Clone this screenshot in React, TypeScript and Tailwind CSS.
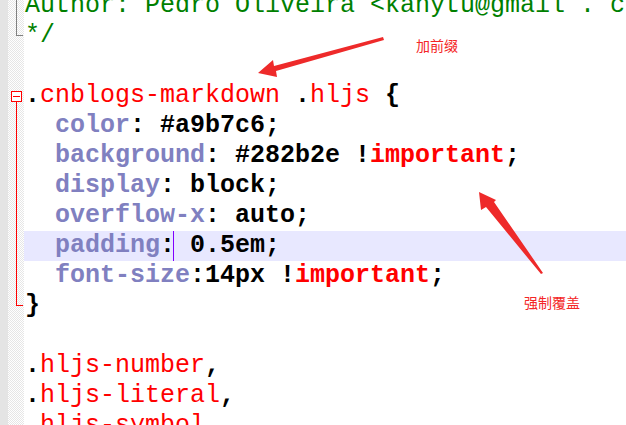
type Seg = { t: string; c?: string };
type Fold = "none" | "gline" | "gend" | "rstart" | "rline" | "rend";

const green = "text-[#008000]";
const red = "text-[#ff0000]";
const prop = "text-[#8080c0] font-bold";
const val = "text-black font-bold";
const imp = "text-[#ff0000] font-bold";

const lines: { segs: Seg[]; fold: Fold; hl?: boolean }[] = [
  { segs: [{ t: "Author: Pedro Oliveira <kanytu@gmail . com>", c: green }], fold: "gline" },
  { segs: [{ t: "*/", c: green }], fold: "gend" },
  { segs: [], fold: "none" },
  {
    segs: [
      { t: ".", c: val },
      { t: "cnblogs-markdown ", c: red },
      { t: ".", c: val },
      { t: "hljs ", c: red },
      { t: "{", c: val },
    ],
    fold: "rstart",
  },
  { segs: [{ t: "  color", c: prop }, { t: ": #a9b7c6;", c: val }], fold: "rline" },
  {
    segs: [
      { t: "  background", c: prop },
      { t: ": #282b2e !", c: val },
      { t: "important", c: imp },
      { t: ";", c: val },
    ],
    fold: "rline",
  },
  { segs: [{ t: "  display", c: prop }, { t: ": block;", c: val }], fold: "rline" },
  { segs: [{ t: "  overflow-x", c: prop }, { t: ": auto;", c: val }], fold: "rline" },
  { segs: [{ t: "  padding", c: prop }, { t: ": 0.5em;", c: val }], fold: "rline", hl: true },
  {
    segs: [
      { t: "  font-size", c: prop },
      { t: ":14px !", c: val },
      { t: "important", c: imp },
      { t: ";", c: val },
    ],
    fold: "rline",
  },
  { segs: [{ t: "}", c: val }], fold: "rend" },
  { segs: [], fold: "none" },
  { segs: [{ t: ".", c: val }, { t: "hljs-number", c: red }, { t: ",", c: val }], fold: "none" },
  { segs: [{ t: ".", c: val }, { t: "hljs-literal", c: red }, { t: ",", c: val }], fold: "none" },
  { segs: [{ t: ".", c: val }, { t: "hljs-symbol", c: red }, { t: ",", c: val }], fold: "none" },
];

// fold markers drawn in the dotted gutter (x offsets relative to gutter start at 8px)
const FoldMark = ({ fold }: { fold: Fold }) => {
  if (fold === "none") return null;
  const isRed = fold.startsWith("r");
  const line = isRed ? "bg-[#ff0000]" : "bg-[#808080]";
  return (
    <div className="absolute inset-0">
      {(fold === "gline" || fold === "rline") && <div className={`absolute left-[8px] top-0 bottom-0 w-px ${line}`} />}
      {(fold === "gend" || fold === "rend") && (
        <>
          <div className={`absolute left-[8px] top-0 h-[15px] w-px ${line}`} />
          <div className={`absolute left-[8px] top-[14px] h-px w-[7px] ${line}`} />
        </>
      )}
      {fold === "rstart" && (
        <>
          <div className="absolute left-[3px] top-[10px] w-[11px] h-[11px] border border-[#ff0000] bg-white flex items-center justify-center">
            <div className="w-[7px] h-px bg-[#ff0000]" />
          </div>
          <div className={`absolute left-[8px] top-[21px] bottom-0 w-px ${line}`} />
        </>
      )}
    </div>
  );
};

export default function App() {
  return (
    <div className="relative w-[626px] h-[425px] overflow-hidden bg-white font-['Liberation_Mono','Courier_New',monospace] text-[25px]">
      <div className="-mt-[9px] flex flex-col">
        {lines.map((ln, i) => (
          <div key={i} className="flex h-[30px]">
            <div className="flex shrink-0">
              <div className="w-[8px] bg-[#e4e4e4]" />
              <div className="relative w-[16px] bg-[repeating-conic-gradient(#e6e6e6_0_25%,#ffffff_0_50%)] bg-[length:2px_2px]">
                <FoldMark fold={ln.fold} />
              </div>
            </div>
            <div className={`relative flex-1 pl-[1px] leading-[30px] whitespace-pre ${ln.hl ? "bg-[#e8e8ff]" : ""}`}>
              {ln.segs.map((s, j) => (
                <span key={j} className={s.c}>
                  {s.t}
                </span>
              ))}
              {ln.hl && <div className="absolute left-[149px] top-0 h-[30px] w-px bg-[#8000ff]" />}
            </div>
          </div>
        ))}
      </div>

      <svg className="absolute inset-0 pointer-events-none" width="626" height="425" viewBox="0 0 626 425">
        <polygon points="383,37 384,40 276,71 277,77 258,73 273,60 274,66" fill="#ee2a2a" />
        <polygon points="541,274 543,273 494,202 496,200 479,192 481,210 486,207" fill="#ee2a2a" />
      </svg>
      <div className="absolute left-[416px] top-[37px] text-[14px] leading-[16px] text-[#f42626] font-['Noto_Sans_CJK_SC',sans-serif]">
        加前缀
      </div>
      <div className="absolute left-[524px] top-[294px] text-[14px] leading-[16px] text-[#f42626] font-['Noto_Sans_CJK_SC',sans-serif]">
        强制覆盖
      </div>
    </div>
  );
}
